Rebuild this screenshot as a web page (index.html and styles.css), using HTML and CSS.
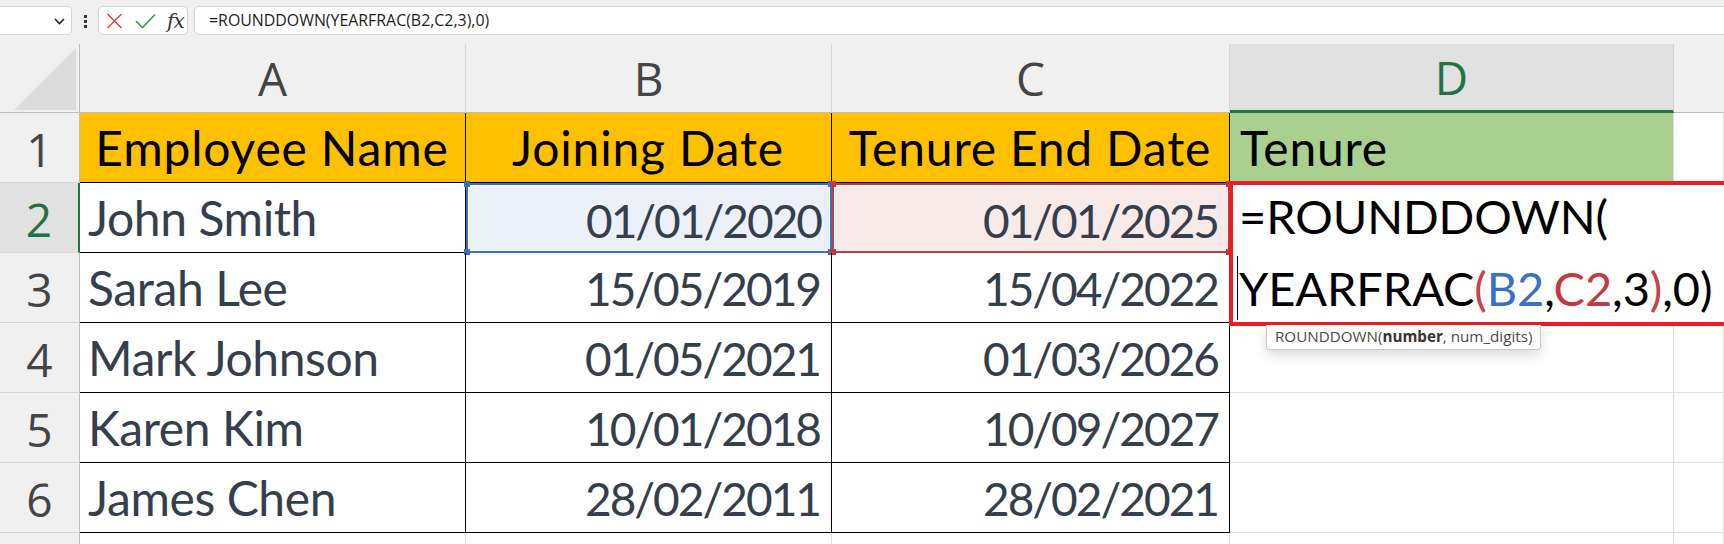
FILE: index.html
```html
<!DOCTYPE html>
<html>
<head>
<meta charset="utf-8">
<link rel="stylesheet" href="styles.css">
</head>
<body>
<div class="toolbar">
  <div class="namebox">
    <svg class="chev" width="11" height="7" viewBox="0 0 11 7"><polyline points="1,1 5.5,5.5 10,1" fill="none" stroke="#222" stroke-width="1.6"/></svg>
  </div>
  <div class="dots"><i></i><i></i><i></i></div>
  <div class="fxgroup">
    <svg class="ico" width="17" height="16" viewBox="0 0 17 16"><path d="M1.5 1 L15.5 15 M15.5 1 L1.5 15" stroke="#e5413b" stroke-width="1.5" fill="none"/></svg>
    <svg class="ico" width="21" height="16" viewBox="0 0 21 16"><polyline points="1,8 7.5,14.5 20,1.5" stroke="#3a9c51" stroke-width="1.6" fill="none"/></svg>
    <span class="fx">fx</span>
  </div>
  <div class="formula">=ROUNDDOWN(YEARFRAC(B2,C2,3),0)</div>
</div>

<div class="sheet">
  <div class="corner"><svg width="62" height="62" viewBox="0 0 62 62"><polygon points="62,0 62,62 0,62" fill="#dcdcdc"/></svg></div>
  <div class="ch">A</div>
  <div class="ch">B</div>
  <div class="ch">C</div>
  <div class="ch sel">D</div>
  <div class="ch last"></div>

  <div class="rh">1</div>
  <div class="c t hd center">Employee Name</div>
  <div class="c t hd center">Joining Date</div>
  <div class="c t hd center">Tenure End Date</div>
  <div class="c hd2">Tenure</div>
  <div class="c"></div>

  <div class="rh active">2</div>
  <div class="c t">John Smith</div>
  <div class="c t num refb">01/01/2020<span class="h tl"></span><span class="h tr"></span><span class="h bl"></span><span class="h br"></span></div>
  <div class="c t num refc">01/01/2025<span class="h tl"></span><span class="h tr"></span><span class="h bl"></span><span class="h br"></span></div>
  <div class="c"></div>
  <div class="c"></div>

  <div class="rh">3</div>
  <div class="c t">Sarah Lee</div>
  <div class="c t num">15/05/2019</div>
  <div class="c t num">15/04/2022</div>
  <div class="c"></div>
  <div class="c"></div>

  <div class="rh">4</div>
  <div class="c t">Mark Johnson</div>
  <div class="c t num">01/05/2021</div>
  <div class="c t num">01/03/2026</div>
  <div class="c"></div>
  <div class="c"></div>

  <div class="rh">5</div>
  <div class="c t">Karen Kim</div>
  <div class="c t num">10/01/2018</div>
  <div class="c t num">10/09/2027</div>
  <div class="c"></div>
  <div class="c"></div>

  <div class="rh">6</div>
  <div class="c t">James Chen</div>
  <div class="c t num">28/02/2011</div>
  <div class="c t num">28/02/2021</div>
  <div class="c"></div>
  <div class="c"></div>

  <div class="rh"></div>
  <div class="c"></div>
  <div class="c"></div>
  <div class="c"></div>
  <div class="c"></div>
  <div class="c"></div>

  <div class="editor">
    <div class="etext">=ROUNDDOWN(<br><span class="caret"></span>YEARFRAC<span class="pr">(</span><span class="rb">B2</span>,<span class="rc">C2</span>,3<span class="pr">)</span>,0)</div>
  </div>
  <div class="tip">ROUNDDOWN(<b>number</b>, num_digits)</div>
</div>
</body>
</html>
```
FILE: styles.css
```css
html, body {
  margin: 0;
  padding: 0;
}
body {
  width: 1724px;
  height: 544px;
  overflow: hidden;
  background: #f0f0f0;
  font-family: "Open Sans", "Liberation Sans", sans-serif;
}

/* formula bar */
.toolbar {
  height: 36px;
  box-sizing: border-box;
  padding-top: 6px;
  display: flex;
  align-items: flex-start;
}
.namebox, .fxgroup, .formula {
  height: 29px;
  box-sizing: border-box;
  background: #fff;
  border: 1px solid #d4d4d4;
  border-radius: 5px;
}
.namebox {
  margin-left: -12px;
  width: 84px;
  display: flex;
  align-items: center;
  justify-content: flex-end;
  padding-right: 6px;
}
.chev { display: block; margin-top: 1px; }
.dots {
  margin-left: 12px;
  width: 4px;
  display: flex;
  flex-direction: column;
  gap: 2px;
  padding-top: 9px;
}
.dots i {
  display: block;
  width: 3px;
  height: 3px;
  background: #333;
}
.fxgroup {
  margin-left: 10px;
  width: 90px;
  display: flex;
  align-items: center;
  padding-left: 7px;
  gap: 12px;
}
.ico { display: block; }
.fx {
  font-family: "DejaVu Serif", "Liberation Serif", serif;
  font-style: italic;
  font-size: 20px;
  color: #333;
  margin-left: -1px;
  line-height: 20px;
  letter-spacing: -1px;
}
.formula {
  margin-left: 6px;
  flex: 1;
  margin-right: -10px;
  padding-left: 14px;
  font-size: 15.9px;
  line-height: 27px;
  color: #1e1e1e;
}

/* sheet grid */
.sheet {
  position: relative;
  margin-top: 8px;
  display: grid;
  grid-template-columns: 80px 386px 366px 398px 444px 1fr;
  grid-template-rows: 69px repeat(7, 70px);
  background: #fff;
}
.corner {
  background: #f0f0f0;
  border-right: 1px solid #bdbdbd;
  border-bottom: 1px solid #bdbdbd;
  box-sizing: border-box;
  display: flex;
  align-items: flex-end;
  justify-content: flex-end;
  padding: 0 3px 2px 0;
}
.corner svg { display: block; }
.ch {
  background: #f0f0f0;
  border-right: 1px solid #d6d6d6;
  border-bottom: 1px solid #bdbdbd;
  box-sizing: border-box;
  display: flex;
  align-items: center;
  justify-content: center;
  font-size: 46px;
  color: #444;
}
.ch.sel {
  background: #e1e1e1;
  color: #217346;
  border-bottom: 3px solid #217346;
  border-right: 1px solid #d0d0d0;
}
.ch.last { border-right: none; }
.rh {
  background: #f0f0f0;
  border-right: 1px solid #bdbdbd;
  border-bottom: 1px solid #d6d6d6;
  box-sizing: border-box;
  display: flex;
  align-items: center;
  justify-content: center;
  font-size: 46px;
  color: #444;
  padding-top: 2px;
}
.rh.active {
  background: #e1e1e1;
  color: #217346;
  border-right: 2px solid #217346;
}

.c {
  position: relative;
  box-sizing: border-box;
  border-right: 1px solid #dedede;
  border-bottom: 1px solid #dedede;
  font-family: Lato, "Open Sans", sans-serif;
  font-size: 48px;
  letter-spacing: -0.4px;
  line-height: 54px;
  padding: 8px 9px 0 8px;
  white-space: nowrap;
  color: #353e4c;
}
.c.t {
  border-right-color: #000;
  border-bottom-color: #000;
}
.c.hd {
  background: #ffc000;
  color: #000;
  letter-spacing: 0.8px;
}
.c.hd2 {
  background: #a9d08e;
  color: #000;
  padding-left: 10px;
  letter-spacing: 0.8px;
}
.center { text-align: center; }
.c.num {
  text-align: right;
  font-size: 46px;
  letter-spacing: -2px;
  padding-right: 11px;
  padding-top: 9px;
}

.c.refb {
  background: #ebf0f9;
  border: 2px solid #3a6fc8;
  box-shadow: inset 0 0 0 1px #fff;
  padding-right: 9px;
}
.c.refc {
  background: #f9eaea;
  border: 2px solid #c4393f;
  box-shadow: inset 0 0 0 1px #fff;
  padding-right: 10px;
}
.h {
  position: absolute;
  width: 6px;
  height: 6px;
}
.refb .h { background: #3a6fc8; }
.refc .h { background: #c4393f; }
.h.tl { left: -4px; top: -4px; }
.h.tr { right: -4px; top: -4px; }
.h.bl { left: -4px; bottom: -4px; }
.h.br { right: -4px; bottom: -4px; }

/* cell editor + tooltip overlay */
.editor {
  position: absolute;
  left: 1229px;
  top: 137px;
  width: 500px;
  height: 145px;
  box-sizing: border-box;
  border: 4px solid #ed1c24;
  background: #fff;
  padding-left: 6px;
}
.etext {
  font-family: Lato, "Open Sans", sans-serif;
  font-size: 47px;
  letter-spacing: -0.1px;
  line-height: 72px;
  margin-top: -5px;
  color: #000;
  white-space: nowrap;
}
.caret {
  display: inline-block;
  width: 1px;
  height: 64px;
  background: #000;
  vertical-align: -14px;
  margin-left: -2px;
  margin-right: 1px;
}
.pr { color: #c8414b; }
.rb { color: #3a6fc8; }
.rc { color: #c4393f; }
.tip {
  position: absolute;
  left: 1266px;
  top: 281px;
  height: 25px;
  box-sizing: border-box;
  padding: 0 8px;
  background: #fff;
  border: 1px solid #c9c9c9;
  border-top: none;
  border-radius: 0 0 4px 4px;
  box-shadow: 0 5px 12px rgba(0, 0, 0, 0.14);
  font-size: 15.2px;
  line-height: 23px;
  color: #4a4a4a;
  white-space: nowrap;
}
.tip b { font-weight: 700; color: #333; }
```
